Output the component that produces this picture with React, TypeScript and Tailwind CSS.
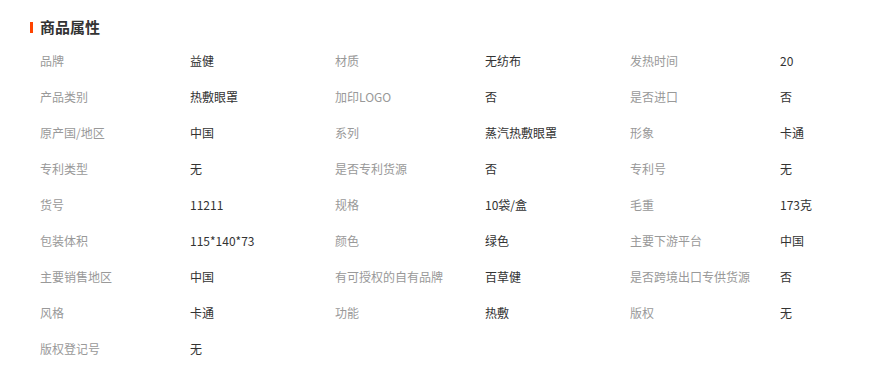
import React from "react";

const attrs: [string, string][] = [
  ["品牌", "益健"],
  ["材质", "无纺布"],
  ["发热时间", "20"],
  ["产品类别", "热敷眼罩"],
  ["加印LOGO", "否"],
  ["是否进口", "否"],
  ["原产国/地区", "中国"],
  ["系列", "蒸汽热敷眼罩"],
  ["形象", "卡通"],
  ["专利类型", "无"],
  ["是否专利货源", "否"],
  ["专利号", "无"],
  ["货号", "11211"],
  ["规格", "10袋/盒"],
  ["毛重", "173克"],
  ["包装体积", "115*140*73"],
  ["颜色", "绿色"],
  ["主要下游平台", "中国"],
  ["主要销售地区", "中国"],
  ["有可授权的自有品牌", "百草健"],
  ["是否跨境出口专供货源", "否"],
  ["风格", "卡通"],
  ["功能", "热敷"],
  ["版权", "无"],
  ["版权登记号", "无"],
];

const App: React.FC = () => {
  return (
    <div
      className="w-[876px] h-[367px] bg-white overflow-hidden pt-[20px] pl-[30px]"
      style={{ fontFamily: '"Microsoft YaHei", "Noto Sans CJK SC", sans-serif' }}
    >
      {/* heading */}
      <div className="flex items-center h-[14px]">
        <span className="w-[3px] h-[11px] bg-[#ff4400]"></span>
        <h2 className="ml-[7px] text-[15px] leading-[14px] font-bold text-[#333]">
          商品属性
        </h2>
      </div>

      {/* attribute grid */}
      <div className="mt-[9px] pl-[10px] grid grid-cols-[150px_145px_150px_145px_150px_96px]">
        {attrs.map(([label, value], i) => (
          <React.Fragment key={i}>
            <div className="h-[36px] flex items-center text-[12px] text-[#999] whitespace-nowrap">
              {label}
            </div>
            <div className="h-[36px] flex items-center text-[12px] text-[#333] whitespace-nowrap">
              {value}
            </div>
          </React.Fragment>
        ))}
      </div>
    </div>
  );
};

export default App;
